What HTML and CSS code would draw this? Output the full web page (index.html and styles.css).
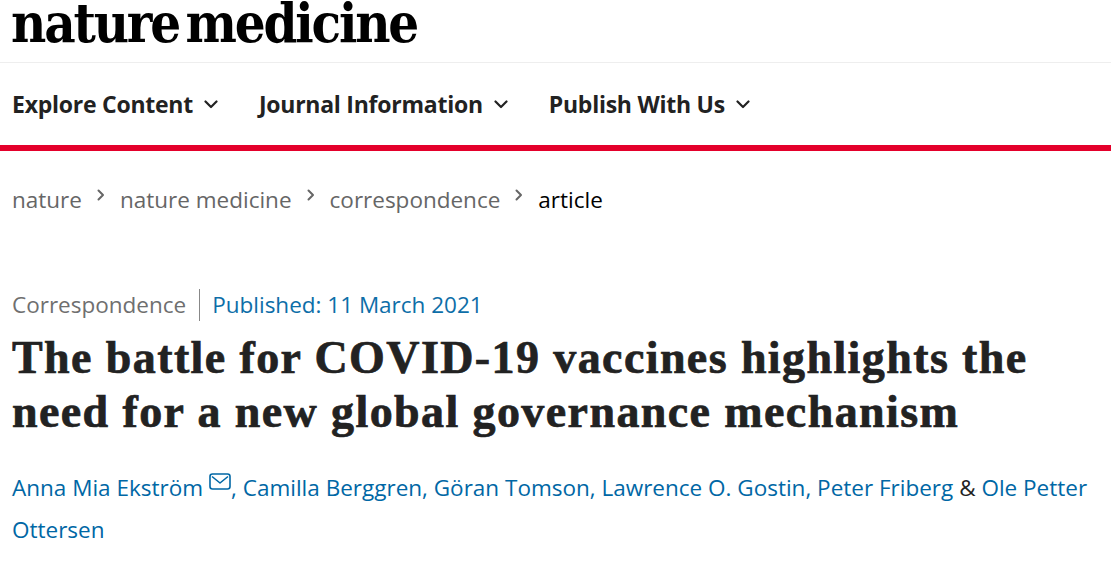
FILE: index.html
```html
<!DOCTYPE html>
<html lang="en">
<head>
<meta charset="utf-8">
<title>The battle for COVID-19 vaccines highlights the need for a new global governance mechanism</title>
<link rel="stylesheet" href="styles.css">
</head>
<body>
<header class="site-header">
  <div class="logo">nature medicine</div>
</header>
<nav class="main-nav">
  <ul class="nav-list">
    <li class="nav-item">Explore Content <svg class="chev" viewBox="0 0 14 9" width="14" height="9"><path d="M1.5 1.5 L7 7 L12.5 1.5" fill="none" stroke="#222" stroke-width="2.2" stroke-linecap="round" stroke-linejoin="round"/></svg></li>
    <li class="nav-item">Journal Information <svg class="chev" viewBox="0 0 14 9" width="14" height="9"><path d="M1.5 1.5 L7 7 L12.5 1.5" fill="none" stroke="#222" stroke-width="2.2" stroke-linecap="round" stroke-linejoin="round"/></svg></li>
    <li class="nav-item">Publish With Us <svg class="chev" viewBox="0 0 14 9" width="14" height="9"><path d="M1.5 1.5 L7 7 L12.5 1.5" fill="none" stroke="#222" stroke-width="2.2" stroke-linecap="round" stroke-linejoin="round"/></svg></li>
  </ul>
</nav>
<main class="content">
  <ol class="breadcrumbs">
    <li class="crumb">nature</li>
    <li class="sep"><svg viewBox="0 0 8 12" width="8" height="12"><path d="M1.5 1.5 L6 6 L1.5 10.5" fill="none" stroke="#666" stroke-width="2" stroke-linecap="round" stroke-linejoin="round"/></svg></li>
    <li class="crumb">nature medicine</li>
    <li class="sep"><svg viewBox="0 0 8 12" width="8" height="12"><path d="M1.5 1.5 L6 6 L1.5 10.5" fill="none" stroke="#666" stroke-width="2" stroke-linecap="round" stroke-linejoin="round"/></svg></li>
    <li class="crumb">correspondence</li>
    <li class="sep"><svg viewBox="0 0 8 12" width="8" height="12"><path d="M1.5 1.5 L6 6 L1.5 10.5" fill="none" stroke="#666" stroke-width="2" stroke-linecap="round" stroke-linejoin="round"/></svg></li>
    <li class="crumb current">article</li>
  </ol>
  <article class="article">
    <ul class="meta">
      <li class="meta-type">Correspondence</li>
      <li class="meta-date">Published: 11 March 2021</li>
    </ul>
    <h1 class="title">The battle for COVID-19 vaccines highlights the need for a new global governance mechanism</h1>
    <p class="authors"><span class="author">Anna Mia Ekström</span><svg class="mail" viewBox="0 0 22 17" width="22" height="17"><rect x="1" y="1" width="20" height="15" rx="2.5" fill="none" stroke="#0067a5" stroke-width="1.6"/><path d="M3 3.5 L11 10 L19 3.5" fill="none" stroke="#0067a5" stroke-width="1.6" stroke-linejoin="round"/></svg>, <span class="author">Camilla Berggren</span>, <span class="author">Göran Tomson</span>, <span class="author">Lawrence O. Gostin</span>, <span class="author">Peter Friberg</span> <span class="amp">&amp;</span> <span class="author">Ole Petter Ottersen</span></p>
  </article>
</main>
</body>
</html>
```
FILE: styles.css
```css
html, body {
  margin: 0;
  padding: 0;
  background: #fff;
}
body {
  font-family: "Open Sans", "Noto Sans", sans-serif;
  color: #222;
}
.site-header {
  height: 62px;
  border-bottom: 1px solid #eee;
  padding-left: 11px;
}
.logo {
  font-family: "DejaVu Serif", serif;
  font-weight: bold;
  font-stretch: condensed;
  font-size: 54px;
  line-height: 46px;
  letter-spacing: -2.2px;
  word-spacing: -8px;
  color: #000;
}
.main-nav {
  height: 82px;
  border-bottom: 6px solid #e4002b;
  display: flex;
  align-items: center;
  padding-left: 12px;
}
.nav-list {
  list-style: none;
  margin: 0;
  padding: 0;
  display: flex;
  gap: 41px;
}
.nav-item {
  font-family: "Open Sans", sans-serif;
  font-weight: 700;
  font-size: 23px;
  letter-spacing: -0.25px;
  color: #222;
  display: flex;
  align-items: center;
  gap: 11px;
}
.chev {
  display: block;
}
.content {
  padding: 0 12px;
}
.breadcrumbs {
  list-style: none;
  margin: 0;
  padding: 0;
  height: 96px;
  display: flex;
  align-items: center;
  gap: 15px;
  font-size: 22.5px;
  color: #666;
}
.breadcrumbs .current {
  color: #000;
}
.sep svg {
  display: block;
  margin-top: -8px;
}
.article {
  padding-top: 42px;
}
.meta {
  list-style: none;
  margin: 0;
  padding: 0;
  display: flex;
  align-items: center;
  font-size: 22.5px;
  line-height: 32px;
}
.meta-type {
  color: #6f6f6f;
  padding-right: 13px;
  border-right: 1px solid #888;
}
.meta-date {
  color: #0d6ea8;
  padding-left: 12px;
}
.title {
  margin: 10px 0 0;
  font-family: "Liberation Serif", serif;
  font-weight: 700;
  font-size: 46px;
  line-height: 54px;
  letter-spacing: 1.4px;
  color: #222;
  -webkit-text-stroke: 0.7px #222;
}
.authors {
  margin: 28px 0 0;
  font-size: 22.5px;
  line-height: 42px;
  color: #0067a5;
}
.amp {
  color: #222;
}
.mail {
  vertical-align: 6px;
  margin-left: 6px;
}
```
